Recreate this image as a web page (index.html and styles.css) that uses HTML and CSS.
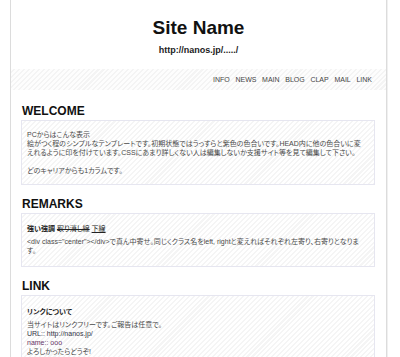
FILE: index.html
```html
<!DOCTYPE html>
<html lang="ja">
<head>
<meta charset="utf-8">
<title>Site Name</title>
<link rel="stylesheet" href="styles.css">
</head>
<body>
<div class="page">
  <header class="header">
    <h1 class="site-name">Site Name</h1>
    <p class="site-url">http://nanos.jp/...../</p>
  </header>
  <nav class="nav">
    <a href="#">INFO</a>
    <a href="#">NEWS</a>
    <a href="#">MAIN</a>
    <a href="#">BLOG</a>
    <a href="#">CLAP</a>
    <a href="#">MAIL</a>
    <a href="#">LINK</a>
  </nav>
  <main class="content">
    <section class="section">
      <h2 class="section-title">WELCOME</h2>
      <div class="box">
        <p>PCからはこんな表示<br>絵がつく程のシンプルなテンプレートです。初期状態ではうっすらと紫色の色合いです。HEAD内に他の色合いに変えれるように印を付けています。CSSにあまり詳しくない人は編集しないか支援サイト等を見て編集して下さい。</p>
        <p>どのキャリアからも1カラムです。</p>
      </div>
    </section>
    <section class="section">
      <h2 class="section-title">REMARKS</h2>
      <div class="box box-remarks">
        <p class="box-lead"><strong>強い強調</strong> <del>取り消し線</del> <u>下線</u></p>
        <p>&lt;div class="center"&gt;&lt;/div&gt;で真ん中寄せ。同じくクラス名をleft, rightと変えればそれぞれ左寄り、右寄りとなります。</p>
      </div>
    </section>
    <section class="section">
      <h2 class="section-title">LINK</h2>
      <div class="box">
        <p class="box-lead box-title"><strong>リンクについて</strong></p>
        <p>当サイトはリンクフリーです。ご報告は任意で。<br><span class="url">URL:: http://nanos.jp/</span><br><span class="name">name:: ooo</span><br>よろしかったらどうぞ!</p>
      </div>
    </section>
  </main>
</div>
</body>
</html>
```
FILE: styles.css
```css
html, body {
  margin: 0;
  padding: 0;
  background: #fff;
}

body {
  font-family: "Liberation Sans", "Noto Sans CJK JP", sans-serif;
  color: #333;
}

.page {
  margin-left: 10px;
  width: 375px;
  min-height: 400px;
  border-left: 1px solid #dcdcdc;
  border-right: 1px solid #dcdcdc;
  box-shadow: 1px 0 0 #f0f0f0;
}

.header {
  padding-top: 17px;
  text-align: center;
}

.site-name {
  margin: 0;
  font-size: 19px;
  line-height: 22px;
  font-weight: bold;
  color: #111;
}

.site-url {
  margin: 5px 0 0;
  font-size: 9px;
  line-height: 12px;
  font-weight: bold;
  color: #222;
}

.nav {
  margin-top: 13px;
  height: 21px;
  display: flex;
  justify-content: flex-end;
  gap: 5.7px;
  padding-right: 14px;
  font-size: 7px;
  line-height: 21px;
  background: repeating-linear-gradient(135deg, #fdfdfd 0, #fdfdfd 2px, #f4f4f4 2px, #f4f4f4 3.5px);
}

.nav a {
  color: #444;
  text-decoration: none;
}

.content {
  padding: 14px 11px 0 10px;
}

.section + .section {
  margin-top: 12px;
}

.section-title {
  margin: 0 0 2px 1px;
  font-size: 12px;
  line-height: 14px;
  font-weight: bold;
  color: #111;
}

.box {
  border: 1px solid #e6e6f0;
  padding: 9px 10px 9px 5px;
  font-size: 7px;
  line-height: 9px;
  color: #4a4a4a;
  font-feature-settings: "palt";
  background: repeating-linear-gradient(135deg, #fff 0, #fff 2px, #f5f5f5 2px, #f5f5f5 3.5px);
}

.box p {
  margin: 0 0 9px;
}

.box p:last-child {
  margin-bottom: 0;
}

.box .box-lead {
  margin: 1px 0 4px;
  color: #222;
}

.box .box-title {
  margin-top: 2px;
}

.box-remarks {
  padding-bottom: 11px;
}

.url {
  color: #334;
}

.name {
  color: #636;
}
```
